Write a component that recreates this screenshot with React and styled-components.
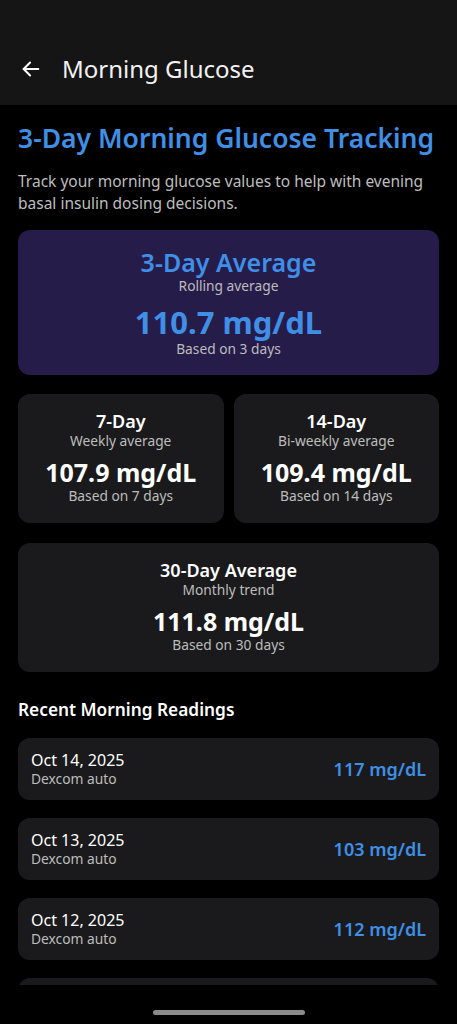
import React from "react";
import styled, { createGlobalStyle } from "styled-components";

const GlobalStyle = createGlobalStyle`
  body {
    margin: 0;
    background: #000;
    font-family: "Noto Sans", Roboto, sans-serif;
    color: #fff;
  }
`;

const Screen = styled.div`
  width: 457px;
  height: 1024px;
  background: #000;
  display: flex;
  flex-direction: column;
  overflow: hidden;
`;

const TopBar = styled.header`
  flex: none;
  height: 105px;
  background: #151515;
  display: flex;
  align-items: flex-end;
  padding: 0 0 20px 20px;
  box-sizing: border-box;
  gap: 20px;
`;

const BackButton = styled.button`
  background: none;
  border: none;
  padding: 0;
  display: flex;
  color: #fff;
  width: 22px;
  height: 22px;
  margin-bottom: 5px;
`;

const TopTitle = styled.h1`
  margin: 0;
  font-size: 24px;
  line-height: 32px;
  font-weight: 400;
  color: #f2f2f2;
`;

const Content = styled.main`
  flex: 1;
  min-height: 0;
  overflow: hidden;
  padding: 16px 18px 0;
  display: flex;
  flex-direction: column;
`;

const Heading = styled.h2`
  margin: 0;
  font-size: 26.5px;
  line-height: 34px;
  font-weight: 600;
  color: #3f8fe6;
  white-space: nowrap;
`;

const Intro = styled.p`
  margin: 15px 0 16px;
  font-size: 15.5px;
  line-height: 22px;
  color: #bdbdbd;
`;

const Card = styled.section`
  flex: none;
  background: ${(p) => (p.$accent ? "#261c4a" : "#1a1a1c")};
  border-radius: 12px;
  display: flex;
  flex-direction: column;
  align-items: center;
  padding: ${(p) => (p.$accent ? "17px 12px" : "16px 12px 18px")};
`;

const CardRow = styled.div`
  flex: none;
  display: grid;
  grid-template-columns: 1fr 1fr;
  gap: 10px;
  margin: 19px 0 20px;
`;

const CardTitle = styled.div`
  font-size: ${(p) => (p.$accent ? "25px" : "18px")};
  font-weight: 600;
  line-height: ${(p) => (p.$accent ? "30px" : "22px")};
  color: ${(p) => (p.$accent ? "#3f8fe6" : "#fff")};
`;

const CardSub = styled.div`
  font-size: 13.75px;
  line-height: 18px;
  color: #bdbdbd;
`;

const Value = styled.div`
  font-size: ${(p) => (p.$accent ? "31px" : "25px")};
  font-weight: 700;
  line-height: ${(p) => (p.$accent ? "36px" : "30px")};
  margin-top: ${(p) => (p.$accent ? "9px" : "7px")};
  color: ${(p) => (p.$accent ? "#3f8fe6" : "#fff")};
`;

const SectionTitle = styled.h3`
  margin: 26px 0 17px;
  font-size: 17.3px;
  line-height: 23px;
  font-weight: 600;
  color: #fff;
`;

const ReadingList = styled.div`
  display: flex;
  flex-direction: column;
  gap: 18px;
`;

const Reading = styled.div`
  flex: none;
  background: #1a1a1c;
  border-radius: 12px;
  height: 62px;
  box-sizing: border-box;
  padding: 0 13px;
  display: flex;
  align-items: center;
  justify-content: space-between;
`;

const ReadingDate = styled.div`
  font-size: 16px;
  line-height: 20px;
  color: #fff;
`;

const ReadingSource = styled.div`
  font-size: 13.8px;
  line-height: 18px;
  color: #bdbdbd;
`;

const ReadingValue = styled.div`
  font-size: 18px;
  font-weight: 600;
  color: #3f8fe6;
`;

const NavBar = styled.div`
  flex: none;
  height: 39px;
  background: #000;
  display: flex;
  justify-content: center;
  align-items: flex-end;
  padding-bottom: 9px;
  box-sizing: border-box;
`;

const Pill = styled.div`
  width: 152px;
  height: 5px;
  border-radius: 3px;
  background: #8a8a8a;
`;

const StatCard = ({ title, sub, value, days, accent }) => (
  <Card $accent={accent}>
    <CardTitle $accent={accent}>{title}</CardTitle>
    <CardSub>{sub}</CardSub>
    <Value $accent={accent}>{value}</Value>
    <CardSub>Based on {days} days</CardSub>
  </Card>
);

const readings = [
  { date: "Oct 14, 2025", value: 117 },
  { date: "Oct 13, 2025", value: 103 },
  { date: "Oct 12, 2025", value: 112 },
  { date: "Oct 11, 2025", value: 108 },
];

const App = () => (
  <Screen>
    <GlobalStyle />
    <TopBar>
      <BackButton aria-label="Back">
        <svg width="22" height="22" viewBox="0 0 24 24" fill="none" stroke="currentColor" strokeWidth="2.2" strokeLinecap="round" strokeLinejoin="round">
          <path d="M20 12H4" />
          <path d="M11 5l-7 7 7 7" />
        </svg>
      </BackButton>
      <TopTitle>Morning Glucose</TopTitle>
    </TopBar>
    <Content>
      <Heading>3-Day Morning Glucose Tracking</Heading>
      <Intro>
        Track your morning glucose values to help with evening basal insulin dosing decisions.
      </Intro>
      <StatCard accent title="3-Day Average" sub="Rolling average" value="110.7 mg/dL" days={3} />
      <CardRow>
        <StatCard title="7-Day" sub="Weekly average" value="107.9 mg/dL" days={7} />
        <StatCard title="14-Day" sub="Bi-weekly average" value="109.4 mg/dL" days={14} />
      </CardRow>
      <StatCard title="30-Day Average" sub="Monthly trend" value="111.8 mg/dL" days={30} />
      <SectionTitle>Recent Morning Readings</SectionTitle>
      <ReadingList>
        {readings.map((r) => (
          <Reading key={r.date}>
            <div>
              <ReadingDate>{r.date}</ReadingDate>
              <ReadingSource>Dexcom auto</ReadingSource>
            </div>
            <ReadingValue>{r.value} mg/dL</ReadingValue>
          </Reading>
        ))}
      </ReadingList>
    </Content>
    <NavBar>
      <Pill />
    </NavBar>
  </Screen>
);

export default App;
